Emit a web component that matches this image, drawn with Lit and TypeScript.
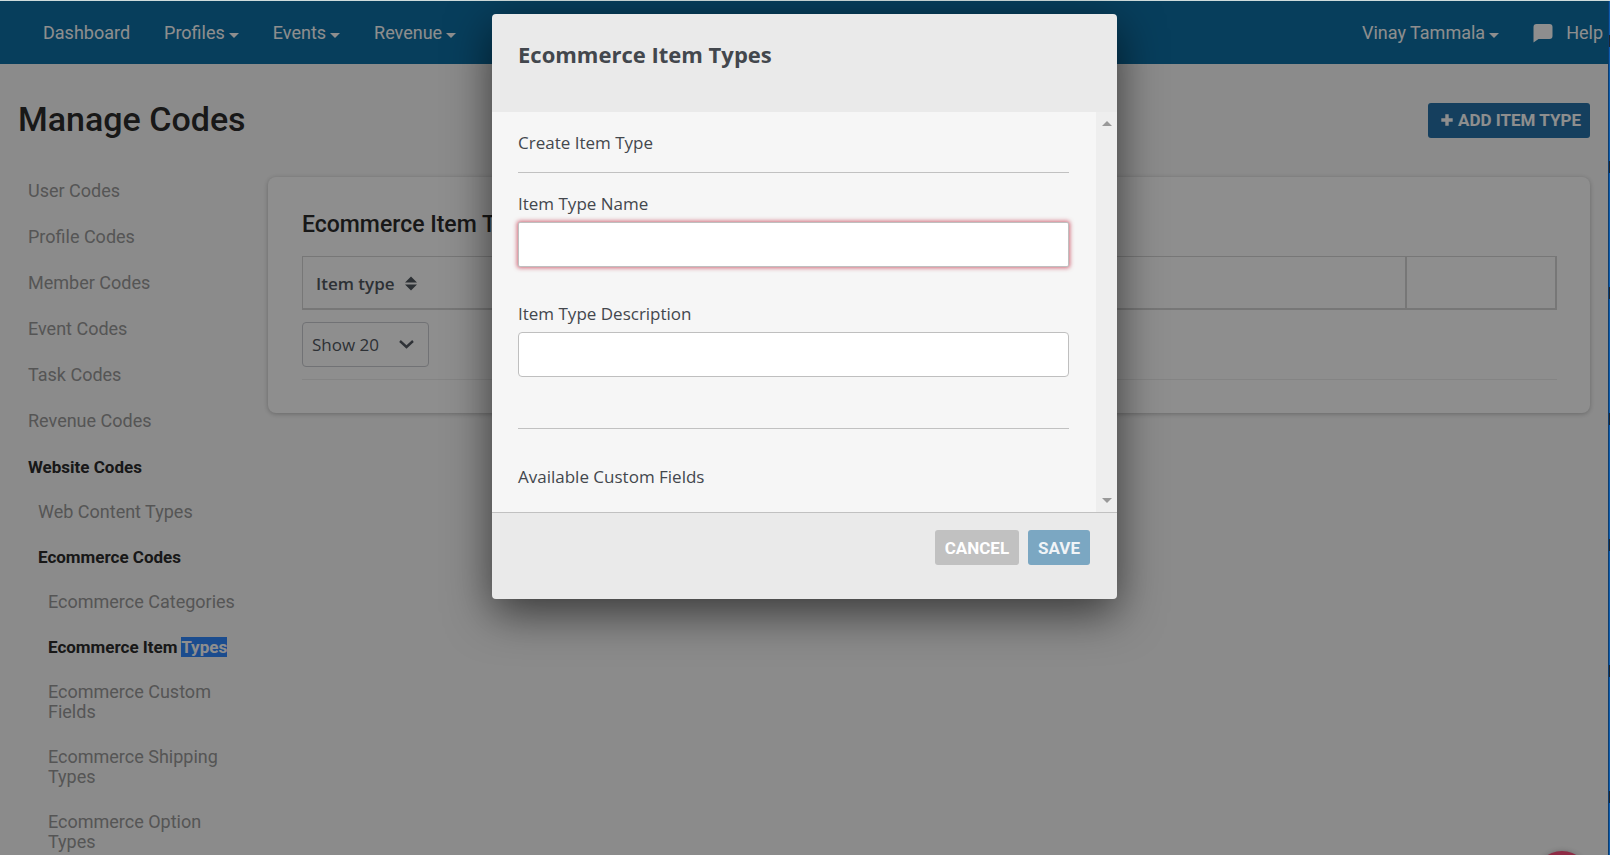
import { LitElement, html, css } from "lit";
import { customElement, property } from "lit/decorators.js";

type CodeLink = { label: string; current?: boolean; marked?: string; children?: CodeLink[] };

const codeLinks: CodeLink[] = [
  { label: "User Codes" },
  { label: "Profile Codes" },
  { label: "Member Codes" },
  { label: "Event Codes" },
  { label: "Task Codes" },
  { label: "Revenue Codes" },
  {
    label: "Website Codes",
    current: true,
    children: [
      { label: "Web Content Types" },
      {
        label: "Ecommerce Codes",
        current: true,
        children: [
          { label: "Ecommerce Categories" },
          { label: "Ecommerce Item ", marked: "Types", current: true },
          { label: "Ecommerce Custom Fields" },
          { label: "Ecommerce Shipping Types" },
          { label: "Ecommerce Option Types" },
        ],
      },
    ],
  },
];

@customElement("top-nav")
export class TopNav extends LitElement {
  static styles = css`
    :host {
      display: block;
      background: #0d70a6;
      color: #ffffff;
      font-size: 18px;
      line-height: 24px;
    }
    .bar {
      display: flex;
      align-items: center;
      justify-content: space-between;
      height: 64px;
      padding: 2px 5px 0 43px;
      box-sizing: border-box;
    }
    .group {
      display: flex;
      gap: 34px;
    }
    .link {
      display: flex;
      align-items: center;
      gap: 4px;
      color: inherit;
      text-decoration: none;
    }
    .help {
      gap: 13px;
    }
    .caret {
      border: 5px solid transparent;
      border-top-color: currentColor;
      border-bottom: 0;
      margin-top: 4px;
    }
  `;

  render() {
    return html`
      <nav class="bar" aria-label="Main">
        <div class="group">
          <a class="link" href="#dashboard">Dashboard</a>
          ${["Profiles", "Events", "Revenue"].map(
            (name) => html`<a class="link" href="#${name}">${name}<span class="caret"></span></a>`
          )}
        </div>
        <div class="group">
          <a class="link" href="#account">Vinay Tammala<span class="caret"></span></a>
          <a class="link help" href="#help">
            <svg width="20" height="20" viewBox="0 0 20 20" fill="currentColor" aria-hidden="true">
              <path d="M3.500 1h13a3 3 0 0 1 3 3v9a3 3 0 0 1-3 3H5.500L.5 19.500V4a3 3 0 0 1 3-3z" />
            </svg>
            Help
          </a>
        </div>
      </nav>
    `;
  }
}

@customElement("code-list")
export class CodeList extends LitElement {
  @property({ attribute: false }) links: CodeLink[] = [];

  static styles = css`
    :host {
      display: block;
      font-size: 18px;
      line-height: 20px;
    }
    .list {
      display: flex;
      flex-direction: column;
      gap: 26px;
      margin: 0;
      padding: 0;
      list-style: none;
    }
    .nested {
      gap: 25px;
      margin-top: 25px;
      padding-left: 10px;
    }
    .link {
      display: block;
      color: #999999;
      text-decoration: none;
    }
    .current {
      color: #2c2c2c;
      font-size: 17px;
      font-weight: 700;
    }
    .marked {
      background: #3189ff;
      color: #ffffff;
    }
  `;

  private renderLinks(links: CodeLink[], nested = false): unknown {
    return html`
      <ul class="list ${nested ? "nested" : ""}">
        ${links.map(
          (item) => html`
            <li>
              <a class="link ${item.current ? "current" : ""}" href="#codes"
                >${item.label}${item.marked ? html`<span class="marked">${item.marked}</span>` : ""}</a
              >
              ${item.children ? this.renderLinks(item.children, true) : ""}
            </li>
          `
        )}
      </ul>
    `;
  }

  render() {
    return html`<nav aria-label="Codes">${this.renderLinks(this.links)}</nav>`;
  }
}

@customElement("item-type-table")
export class ItemTypeTable extends LitElement {
  static styles = css`
    :host {
      display: block;
      padding: 34px 33px 33px 34px;
      border-radius: 8px;
      background: #ffffff;
      box-shadow: 0 1px 5px rgba(0, 0, 0, 0.25);
      color: #52585f;
    }
    .title {
      margin: 0;
      color: #2c2c2c;
      font-size: 23px;
      font-weight: 500;
      line-height: 28px;
    }
    .table {
      width: 100%;
      height: 54px;
      margin-top: 17px;
      border-collapse: collapse;
      border: 1px solid #d6d6d6;
    }
    .head {
      padding: 2px 13px 0;
      border: 1px solid #d6d6d6;
      border-width: 1px 2px 2px 1px;
      font: 600 17px/24px "Open Sans", "Noto Sans", sans-serif;
      text-align: left;
    }
    .actions {
      width: 122px;
    }
    .sort {
      display: flex;
      align-items: center;
      gap: 10px;
      padding: 0;
      border: 0;
      background: none;
      color: inherit;
      font: inherit;
    }
    .footer {
      display: flex;
      padding: 12px 0;
      border-bottom: 1px solid #eeeeee;
    }
    .size {
      width: 127px;
      height: 45px;
      padding: 0 9px;
      border: 1px solid #cbcdd2;
      border-radius: 4px;
      appearance: none;
      background: url("data:image/svg+xml,%3Csvg xmlns='http://www.w3.org/2000/svg' width='15' height='9'%3E%3Cpath d='M1 1l6.500 6L14 1' fill='none' stroke='%23555b63' stroke-width='2.400'/%3E%3C/svg%3E")
        no-repeat right 14px top 17px;
      color: inherit;
      font: 17px/24px "Open Sans", "Noto Sans", sans-serif;
    }
  `;

  render() {
    return html`
      <h2 class="title">Ecommerce Item Types</h2>
      <table class="table">
        <thead>
          <tr>
            <th class="head" scope="col">
              <button class="sort" type="button">
                Item type
                <svg width="12" height="15" viewBox="0 0 12 15" fill="currentColor" aria-hidden="true">
                  <path d="M0 6.500 6 .5l6 6zM0 8.500h12L6 14.500z" />
                </svg>
              </button>
            </th>
            <th class="head actions" scope="col" aria-label="Actions"></th>
          </tr>
        </thead>
      </table>
      <div class="footer">
        <select class="size" aria-label="Rows per page">
          <option>Show 20</option>
        </select>
      </div>
    `;
  }
}

@customElement("item-type-dialog")
export class ItemTypeDialog extends LitElement {
  static styles = css`
    :host {
      display: block;
      width: 625px;
      max-width: 100%;
      border-radius: 4px;
      overflow: hidden;
      background: #eaeaea;
      box-shadow: 0 14px 45px rgba(0, 0, 0, 0.6);
      color: #43474d;
      font: 17px/24px "Open Sans", "Noto Sans", sans-serif;
    }
    .title {
      margin: 0;
      padding: 24px 26px 42px;
      font-size: 22px;
      font-weight: 700;
      line-height: 32px;
    }
    .body {
      display: flex;
      background: #f6f6f6;
    }
    .form {
      flex: 1;
      padding: 19px 27px 23px 26px;
    }
    .text {
      margin: 0;
    }
    .rule {
      height: 1px;
      margin: 17px 0 19px;
      border: 0;
      background: #c1c1c1;
    }
    .last {
      margin: 51px 0 36px;
    }
    .label {
      display: block;
    }
    .input {
      display: block;
      width: 100%;
      height: 45px;
      margin: 6px 0 35px;
      padding: 0 12px;
      box-sizing: border-box;
      border: 1px solid #bfbfbf;
      border-radius: 4px;
      background: #ffffff;
      font: inherit;
    }
    .invalid {
      border-radius: 2px;
      box-shadow: 0 0 4px 1px rgba(200, 70, 90, 0.8);
    }
    .track {
      display: flex;
      flex-direction: column;
      justify-content: space-between;
      align-items: center;
      width: 21px;
      padding: 9px 0;
      box-sizing: border-box;
      background: #eeeeee;
    }
    .up,
    .down {
      border: 5px solid transparent;
    }
    .up {
      border-top: 0;
      border-bottom-color: #999999;
    }
    .down {
      border-bottom: 0;
      border-top-color: #999999;
    }
    .footer {
      display: flex;
      justify-content: flex-end;
      gap: 9px;
      padding: 17px 27px 34px;
      border-top: 1px solid #c1c1c1;
    }
    .button {
      height: 35px;
      padding: 0 10px;
      border: 0;
      border-radius: 3px;
      background: #c1c1c1;
      color: #ffffff;
      font: 700 17px/24px Roboto, sans-serif;
    }
    .save {
      background: #7ba7c2;
      color: #f0f4f7;
    }
  `;

  render() {
    return html`
      <section role="dialog" aria-labelledby="title">
        <h2 class="title" id="title">Ecommerce Item Types</h2>
        <div class="body">
          <form class="form">
            <p class="text">Create Item Type</p>
            <hr class="rule" />
            <label class="label" for="name">Item Type Name</label>
            <input class="input invalid" id="name" type="text" />
            <label class="label" for="description">Item Type Description</label>
            <input class="input" id="description" type="text" />
            <hr class="rule last" />
            <p class="text">Available Custom Fields</p>
          </form>
          <div class="track" aria-hidden="true"><span class="up"></span><span class="down"></span></div>
        </div>
        <footer class="footer">
          <button class="button" type="button">CANCEL</button>
          <button class="button save" type="button">SAVE</button>
        </footer>
      </section>
    `;
  }
}

@customElement("app-root")
export class AppRoot extends LitElement {
  static styles = css`
    :host {
      display: block;
      position: relative;
      height: 100vh;
      overflow: hidden;
      background: #fafafa;
      font-family: Roboto, sans-serif;
    }
    .page {
      padding-right: 2px;
    }
    .heading {
      display: flex;
      align-items: center;
      justify-content: space-between;
      padding: 33px 18px 34px 18px;
    }
    .title {
      margin: 0;
      padding-bottom: 2px;
      color: #2c2c2c;
      font-size: 34px;
      font-weight: 500;
      line-height: 44px;
    }
    .add {
      display: flex;
      align-items: center;
      gap: 5px;
      height: 35px;
      padding: 0 9px 0 13px;
      border: 0;
      border-radius: 3px;
      background: #2672a9;
      color: #ffffff;
      font: 700 17px/24px Roboto, sans-serif;
    }
    .columns {
      display: grid;
      grid-template-columns: 210px 1fr;
      gap: 30px;
      align-items: start;
      padding: 0 18px 0 28px;
    }
    .codes {
      padding-top: 4px;
    }
    .backdrop {
      position: absolute;
      inset: 0;
      display: flex;
      justify-content: center;
      align-items: flex-start;
      padding: 13px 1px 0 0;
      border-top: 1px solid #cfdcdc;
      background: rgba(0, 0, 0, 0.445);
    }
    .chat {
      position: absolute;
      right: 21px;
      bottom: -50px;
      width: 54px;
      height: 54px;
      padding: 0;
      border: 0;
      border-radius: 50%;
      background: #ff4e7d;
      box-shadow: 0 1px 6px rgba(0, 0, 0, 0.3);
    }
    .edge {
      position: absolute;
      top: 1px;
      right: 0;
      bottom: 0;
      width: 2px;
      border-left: 1px solid #0b3c6f;
      box-sizing: border-box;
      background: repeating-linear-gradient(#0c5cae 0 34px, #1c2733 34px 46px, #0c5cae 46px 126px);
    }
  `;

  render() {
    return html`
      <div class="page">
        <top-nav></top-nav>
        <header class="heading">
          <h1 class="title">Manage Codes</h1>
          <button class="add" type="button">
            <svg width="12" height="12" viewBox="0 0 12 12" fill="currentColor" aria-hidden="true">
              <path d="M4.300.3h3.400v4h4v3.400h-4v4H4.300v-4h-4V4.300h4z" />
            </svg>
            ADD ITEM TYPE
          </button>
        </header>
        <main class="columns">
          <code-list class="codes" .links=${codeLinks}></code-list>
          <item-type-table></item-type-table>
        </main>
      </div>
      <button class="chat" type="button" aria-label="Chat"></button>
      <div class="backdrop"><item-type-dialog></item-type-dialog></div>
      <div class="edge"></div>
    `;
  }
}
